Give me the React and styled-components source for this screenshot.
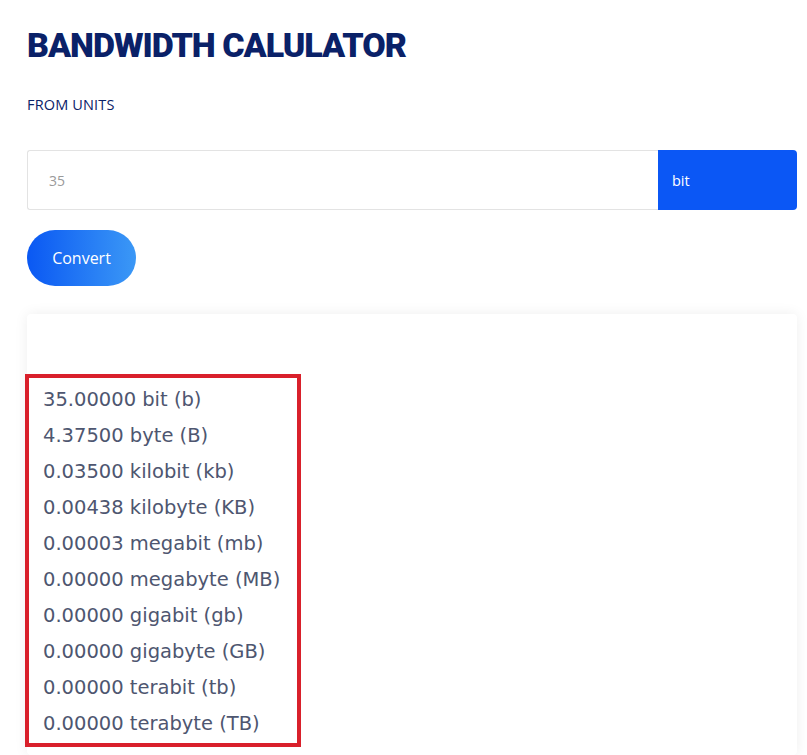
import React from "react";
import styled, { createGlobalStyle } from "styled-components";

const Global = createGlobalStyle`
  html, body { margin: 0; padding: 0; background: #ffffff; }
  body { font-family: "DejaVu Sans", "Open Sans", sans-serif; }
`;

const Page = styled.div`
  padding: 25px 10px 0 27px;
  display: flex;
  flex-direction: column;
  height: 755px;
  box-sizing: border-box;
  overflow: hidden;
`;

const Title = styled.h1`
  margin: 0;
  font-family: Roboto, "Liberation Sans", sans-serif;
  font-weight: 900;
  font-size: 34px;
  line-height: 40px;
  letter-spacing: -1px;
  color: #0a2168;
`;

const Label = styled.div`
  margin-top: 31px;
  font-family: "Open Sans", sans-serif;
  font-weight: 500;
  font-size: 14.5px;
  letter-spacing: 0.15px;
  line-height: 18px;
  color: #0a2168;
`;

const InputRow = styled.div`
  margin-top: 36px;
  display: flex;
  height: 60px;
`;

const NumberInput = styled.div`
  flex: 1;
  display: flex;
  align-items: center;
  padding-left: 21px;
  border: 1px solid #e3e3e3;
  border-right: none;
  border-radius: 3px 0 0 3px;
  font-family: "Open Sans", sans-serif;
  font-size: 14px;
  color: #9a9a9a;
`;

const UnitSelect = styled.div`
  width: 125px;
  display: flex;
  align-items: center;
  padding-left: 14px;
  background: #0b57f5;
  border-radius: 0 4px 4px 0;
  font-family: "Open Sans", sans-serif;
  font-size: 14.5px;
  font-weight: 500;
  color: #ffffff;
`;

const ConvertButton = styled.button`
  margin-top: 20px;
  align-self: flex-start;
  width: 109px;
  height: 56px;
  border: none;
  border-radius: 28px;
  background: linear-gradient(90deg, #0a58f3 0%, #3b98f6 100%);
  color: #ffffff;
  font-family: "Open Sans", sans-serif;
  font-size: 16px;
  font-weight: 500;
  cursor: pointer;
`;

const Card = styled.div`
  margin-top: 28px;
  flex: 1;
  background: #ffffff;
  border-radius: 4px;
  box-shadow: 0 0 14px rgba(0, 0, 0, 0.07);
  padding-top: 60px;
`;

const ResultBox = styled.ul`
  list-style: none;
  margin: 0 0 0 -2px;
  padding: 3px 0 2px 14px;
  width: 254px;
  border: 4px solid #d9202b;
`;

const ResultLine = styled.li`
  height: 36px;
  display: flex;
  align-items: center;
  font-size: 19.5px;
  color: #4e5670;
  white-space: nowrap;
`;

const results = [
  "35.00000 bit (b)",
  "4.37500 byte (B)",
  "0.03500 kilobit (kb)",
  "0.00438 kilobyte (KB)",
  "0.00003 megabit (mb)",
  "0.00000 megabyte (MB)",
  "0.00000 gigabit (gb)",
  "0.00000 gigabyte (GB)",
  "0.00000 terabit (tb)",
  "0.00000 terabyte (TB)",
];

export default function App() {
  return (
    <>
      <Global />
      <Page>
        <Title>BANDWIDTH CALULATOR</Title>
        <Label>FROM UNITS</Label>
        <InputRow>
          <NumberInput>35</NumberInput>
          <UnitSelect>bit</UnitSelect>
        </InputRow>
        <ConvertButton>Convert</ConvertButton>
        <Card>
          <ResultBox>
            {results.map((r) => (
              <ResultLine key={r}>{r}</ResultLine>
            ))}
          </ResultBox>
        </Card>
      </Page>
    </>
  );
}
